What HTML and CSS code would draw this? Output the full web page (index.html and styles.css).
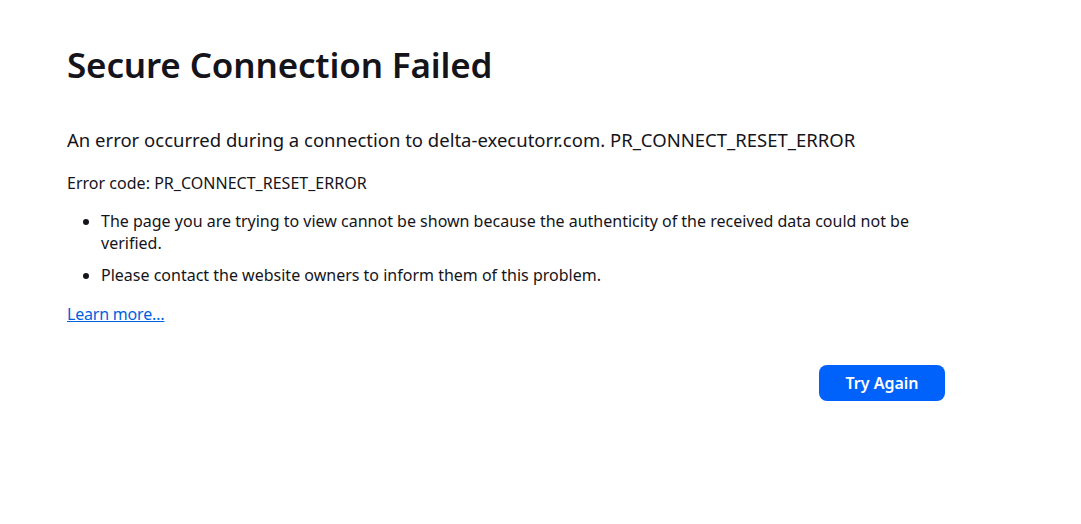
FILE: index.html
```html
<!DOCTYPE html>
<html lang="en">
<head>
<meta charset="utf-8">
<title>Secure Connection Failed</title>
<link rel="stylesheet" href="styles.css">
</head>
<body>
<main class="container">
  <h1 class="title">Secure Connection Failed</h1>
  <p class="short-desc">An error occurred during a connection to delta-executorr.com. PR_CONNECT_RESET_ERROR</p>
  <p class="code">Error code: PR_CONNECT_RESET_ERROR</p>
  <ul class="list">
    <li>The page you are trying to view cannot be shown because the authenticity of the received data could not be verified.</li>
    <li>Please contact the website owners to inform them of this problem.</li>
  </ul>
  <p class="learn"><a href="#">Learn more…</a></p>
  <div class="actions">
    <button class="btn">Try Again</button>
  </div>
</main>
</body>
</html>
```

FILE: styles.css
```css
html, body {
  margin: 0;
  padding: 0;
  background: #ffffff;
}
body {
  font-family: "Noto Sans", "Open Sans", sans-serif;
  color: #15141a;
  font-size: 16px;
}
.container {
  width: 878px;
  padding: 39px 0 0 67px;
}
.title {
  margin: 0;
  font-size: 35px;
  font-weight: 600;
  line-height: 52px;
  letter-spacing: -0.15px;
}
.short-desc {
  margin: 36px 0 0;
  font-size: 18.5px;
  line-height: 26px;
}
.code {
  margin: 18px 0 0;
  font-size: 16px;
  line-height: 24px;
  letter-spacing: 0.02px;
}
.list {
  margin: 15px 0 0;
  padding-left: 34px;
  line-height: 22px;
}
.list li + li {
  margin-top: 10px;
}
.learn {
  margin: 17px 0 0;
  line-height: 22px;
  letter-spacing: -0.2px;
}
.learn a {
  color: #0061e0;
}
.actions {
  display: flex;
  justify-content: flex-end;
  margin-top: 40px;
}
.btn {
  width: 126px;
  height: 36px;
  border: none;
  border-radius: 8px;
  background: #0062fa;
  color: #fff;
  font-family: inherit;
  font-size: 16px;
  font-weight: 600;
}
```
